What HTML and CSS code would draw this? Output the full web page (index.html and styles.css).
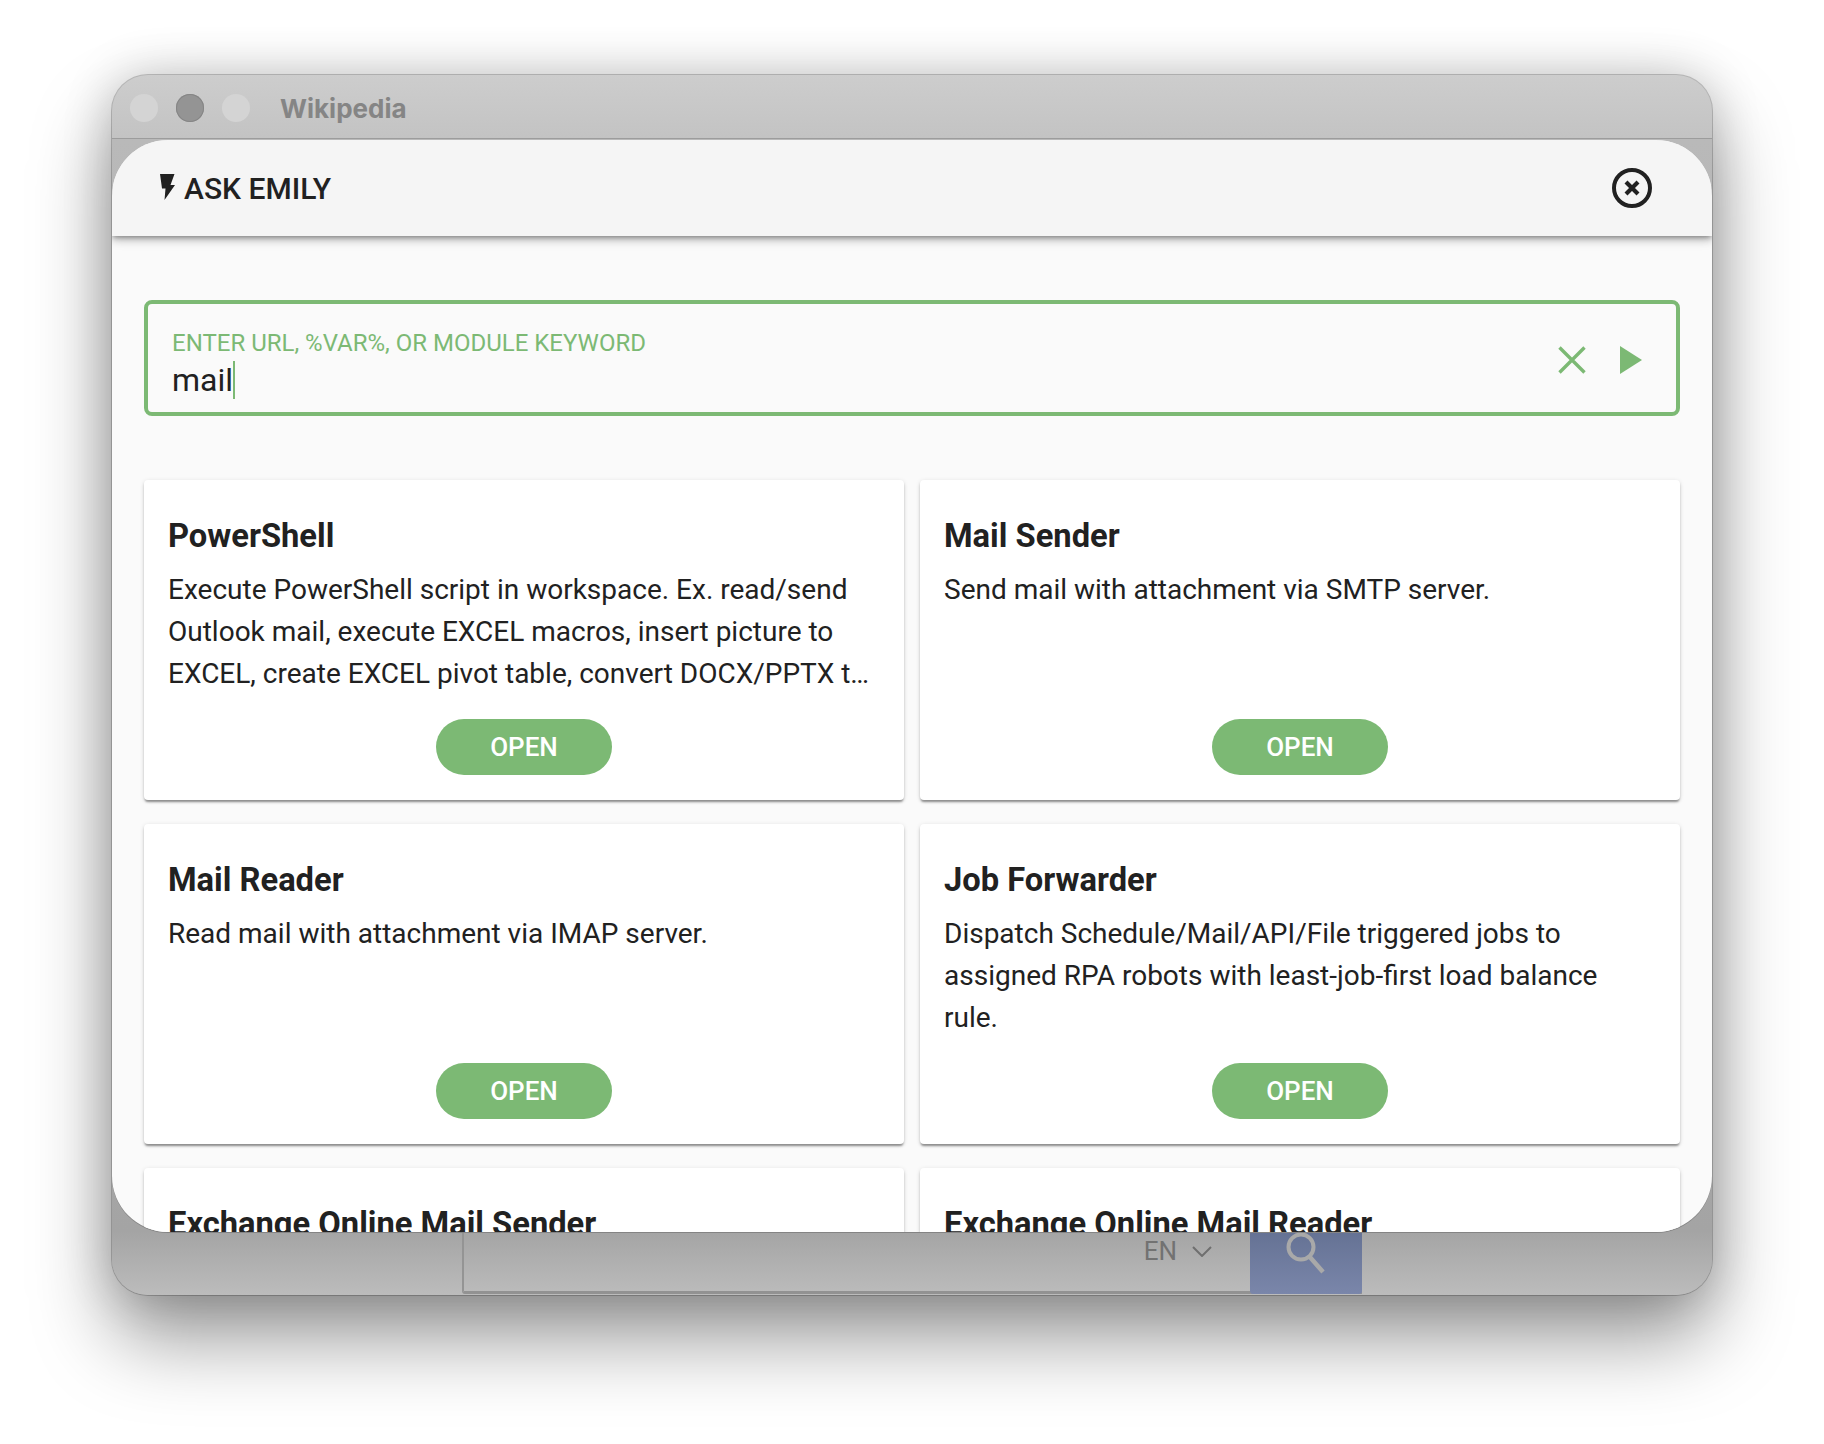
FILE: index.html
```html
<!DOCTYPE html>
<html lang="en">
<head>
<meta charset="UTF-8" />
<title>Ask Emily</title>
<link rel="stylesheet" href="styles.css">
</head>
<body>

<div class="window">
  <div class="titlebar">
    <span class="light"></span>
    <span class="light light-mid"></span>
    <span class="light"></span>
    <span class="window-title">Wikipedia</span>
  </div>

  <div class="page-behind">
    <div class="wiki-search">
      <span class="wiki-lang">EN</span>
      <svg class="wiki-chevron" viewBox="0 0 20 11" width="20" height="11">
        <path d="M1 1l9 9 9-9" fill="none" stroke="#6f6f6f" stroke-width="2"/>
      </svg>
      <div class="wiki-go">
        <svg viewBox="0 0 40 42" width="40" height="42">
          <circle cx="15" cy="15" r="12.5" fill="none" stroke="#a9a9a9" stroke-width="4"/>
          <path d="M23 24l14 16" fill="none" stroke="#a9a9a9" stroke-width="4.5"/>
        </svg>
      </div>
    </div>
  </div>

  <div class="modal">
    <header class="modal-header">
      <h2 class="modal-title">
        <svg class="bolt" viewBox="0 0 15 26" width="15" height="26">
          <path d="M0 0h14.500l-4 11h4.500L4.500 26l1-11.500H2z" fill="#212121"/>
        </svg>
        ASK EMILY
      </h2>
      <svg class="close-btn" viewBox="0 0 40 40" width="40" height="40">
        <circle cx="20" cy="20" r="18" fill="none" stroke="#212121" stroke-width="4"/>
        <path d="M14 14l12 12M26 14L14 26" fill="none" stroke="#212121" stroke-width="4.200"/>
      </svg>
    </header>

    <div class="modal-body">
      <div class="url-field">
        <div class="url-text">
          <label class="url-label">ENTER URL, %VAR%, OR MODULE KEYWORD</label>
          <div class="url-value">mail<span class="caret"></span></div>
        </div>
        <svg class="url-icon" viewBox="0 0 28 28" width="28" height="28">
          <path d="M1.500 1.500l25 25M26.500 1.500l-25 25" fill="none" stroke="#7cb974" stroke-width="3.400"/>
        </svg>
        <svg class="url-icon" viewBox="0 0 22 28" width="22" height="28">
          <path d="M0 0l22 14L0 28z" fill="#7cb974"/>
        </svg>
      </div>

      <div class="cards">
        <div class="card">
          <h3 class="card-title">PowerShell</h3>
          <p class="card-text">Execute PowerShell script in workspace. Ex. read/send Outlook mail, execute EXCEL macros, insert picture to EXCEL, create EXCEL pivot table, convert DOCX/PPTX to PDF, merge PDF files, and more.</p>
          <button class="open-btn">OPEN</button>
        </div>
        <div class="card">
          <h3 class="card-title">Mail Sender</h3>
          <p class="card-text">Send mail with attachment via SMTP server.</p>
          <button class="open-btn">OPEN</button>
        </div>
        <div class="card">
          <h3 class="card-title">Mail Reader</h3>
          <p class="card-text">Read mail with attachment via IMAP server.</p>
          <button class="open-btn">OPEN</button>
        </div>
        <div class="card">
          <h3 class="card-title">Job Forwarder</h3>
          <p class="card-text">Dispatch Schedule/Mail/API/File triggered jobs to assigned RPA robots with least-job-first load balance rule.</p>
          <button class="open-btn">OPEN</button>
        </div>
        <div class="card">
          <h3 class="card-title">Exchange Online Mail Sender</h3>
          <p class="card-text"></p>
          <button class="open-btn">OPEN</button>
        </div>
        <div class="card">
          <h3 class="card-title">Exchange Online Mail Reader</h3>
          <p class="card-text"></p>
          <button class="open-btn">OPEN</button>
        </div>
      </div>
    </div>
  </div>
</div>

</body>
</html>
```

FILE: styles.css
```css
* {
  box-sizing: border-box;
}
html,
body {
  height: 1444px;
  overflow: hidden;
}
body {
  margin: 0;
  padding: 75px 112px 0;
  background: #ffffff;
  font-family: Roboto, "Liberation Sans", sans-serif;
  color: #212121;
}

/* macOS window */
.window {
  position: relative;
  width: 1600px;
  height: 1220px;
  border-radius: 36px;
  background: #b4b4b4;
  box-shadow: 0 0 0 1px rgba(0,0,0,0.2), 0 44px 80px rgba(0,0,0,0.4), 0 0 50px rgba(0,0,0,0.2);
  display: flex;
  flex-direction: column;
  overflow: hidden;
}
.titlebar {
  height: 64px;
  padding: 2px 0 0 18px;
  display: flex;
  align-items: center;
  gap: 18px;
  background: linear-gradient(#cdcdcd, #c3c3c3);
  border-bottom: 1px solid #9c9c9c;
  flex-shrink: 0;
}
.light {
  width: 28px;
  height: 28px;
  border-radius: 50%;
  background: #d4d4d4;
}
.light-mid {
  background: #949494;
  box-shadow: inset 0 0 0 1px #858585;
}
.window-title {
  margin: 2px 0 0 12px;
  font-family: Inter, Roboto, sans-serif;
  font-weight: 700;
  font-size: 26px;
  color: #858585;
}

/* the page dimmed behind the modal */
.page-behind {
  flex: 1;
  display: flex;
  align-items: flex-end;
  padding-left: 350px;
  background: linear-gradient(#b9b9b9 0, #a4a4a4 94.500%, #bcbcbc 100%);
}
.wiki-search {
  width: 900px;
  height: 62px;
  display: flex;
  align-items: flex-start;
  justify-content: flex-end;
  border-left: 2px solid #949494;
  border-bottom: 3px solid #929292;
  border-radius: 0 0 0 3px;
  margin-bottom: 1px;
}
.wiki-lang {
  margin-top: 6px;
  font-size: 26px;
  line-height: 26px;
  color: #727272;
}
.wiki-chevron {
  margin: 14px 38px 0 15px;
}
.wiki-go {
  width: 112px;
  height: 62px;
  padding-left: 36px;
  background: linear-gradient(#657294, #7a86aa);
  border-radius: 0 0 3px 3px;
}

/* modal */
.modal {
  position: absolute;
  left: 0;
  right: 0;
  top: 65px;
  height: 1092px;
  border-radius: 56px;
  background: #fafafa;
  box-shadow: 0 1px 0 #848484;
  overflow: hidden;
}
.modal-header {
  height: 96px;
  padding: 0 60px 0 48px;
  display: flex;
  align-items: center;
  justify-content: space-between;
  background: #f5f5f5;
  box-shadow: 0 2px 5px -1px rgba(0,0,0,0.35), 0 4px 8px rgba(0,0,0,0.18), 0 1px 14px rgba(0,0,0,0.14);
  position: relative;
}
.modal-title {
  margin: 0;
  display: flex;
  align-items: center;
  gap: 9px;
  font-size: 30px;
  font-weight: 500;
}
.bolt {
  margin-top: -2px;
}
.modal-body {
  padding: 64px 32px 0;
}

/* url input */
.url-field {
  height: 116px;
  padding: 4px 34px 0 24px;
  display: flex;
  align-items: center;
  gap: 34px;
  border: 4px solid #7cb974;
  border-radius: 8px;
}
.url-text {
  flex: 1;
  padding-top: 7px;
}
.url-label {
  display: block;
  font-size: 24px;
  line-height: 28px;
  color: #7cb974;
}
.url-value {
  margin-top: 4px;
  font-size: 32px;
  line-height: 38px;
  display: flex;
  align-items: center;
}
.caret {
  width: 2px;
  height: 38px;
  background: #7cb974;
}

/* module cards */
.cards {
  margin-top: 64px;
  display: grid;
  grid-template-columns: 760px 760px;
  grid-auto-rows: 320px;
  column-gap: 16px;
  row-gap: 24px;
}
.card {
  padding: 35px 24px 25px;
  display: flex;
  flex-direction: column;
  background: #ffffff;
  border-radius: 4px;
  box-shadow: 0 3px 2px -1px rgba(0,0,0,0.3), 0 2px 3px rgba(0,0,0,0.14), 0 1px 5px rgba(0,0,0,0.1);
}
.card-title {
  margin: 0 0 12px;
  font-size: 32.700px;
  line-height: 42px;
  font-weight: 700;
}
.card-text {
  margin: 0;
  font-size: 28px;
  line-height: 42px;
  display: -webkit-box;
  -webkit-box-orient: vertical;
  -webkit-line-clamp: 3;
  overflow: hidden;
}
.open-btn {
  width: 176px;
  height: 56px;
  margin: auto auto 0;
  border: none;
  border-radius: 28px;
  background: #7cb974;
  color: #ffffff;
  font-family: inherit;
  font-size: 26px;
  font-weight: 500;
}
```
